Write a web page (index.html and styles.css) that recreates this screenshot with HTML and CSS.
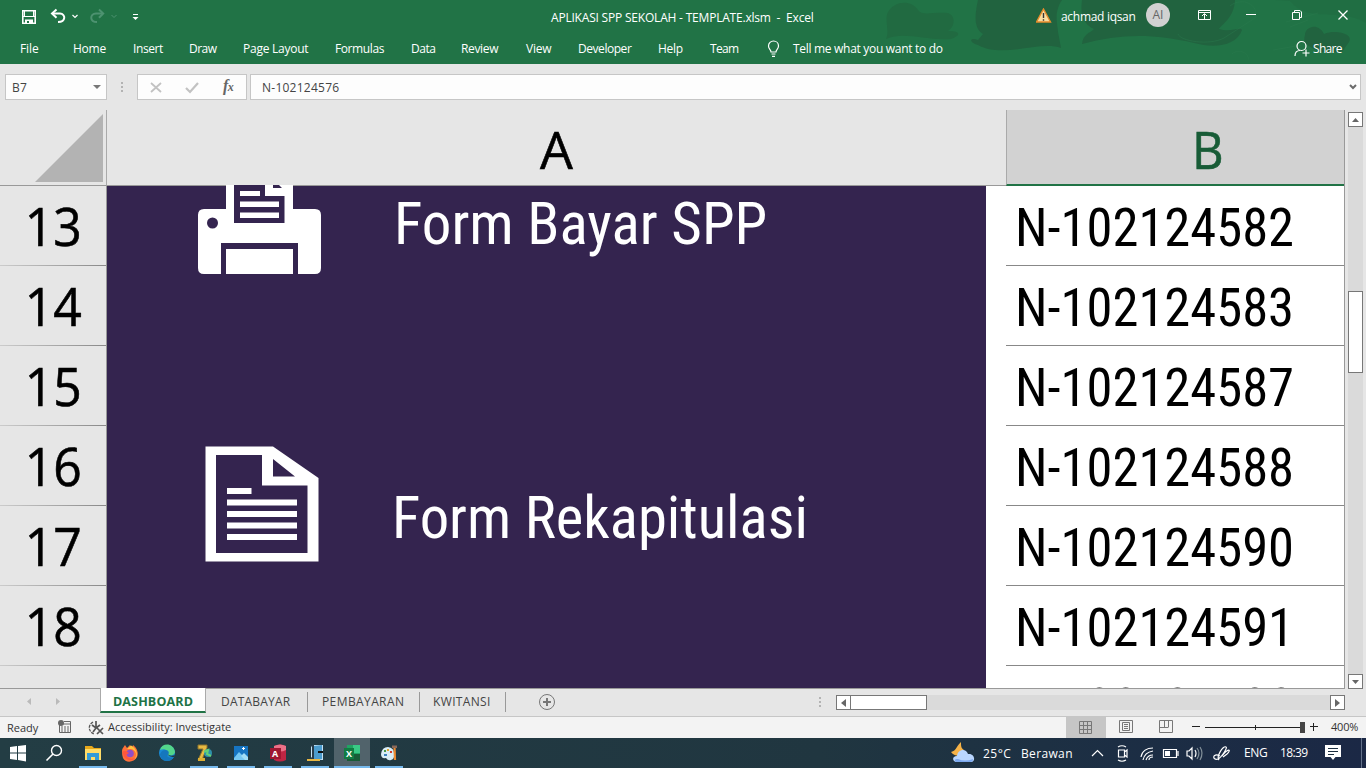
FILE: index.html
```html
<!DOCTYPE html>
<html lang="id">
<head>
<meta charset="utf-8">
<title>APLIKASI SPP SEKOLAH - TEMPLATE.xlsm - Excel</title>
<link rel="stylesheet" href="styles.css">
</head>
<body>
<header class="ribbon">
  <svg class="ribbon-art" width="506" height="64" viewBox="860 0 506 64">
    <g fill="#216a41"><path d="M886 39C890 31 884 20 888 12C894 1 911-1 918 10C922 16 931 12 948 13C956 16 955 27 948 31C960 31 962 35 951 39C925 41 905 31 886 39Z"/>
    <path d="M978 0H1062C1053 13 1058 26 1058 32L1061 48C1040 40 1003 59 978 45C968 42 970 37 978 40L983 34C973 28 975 14 978 0Z" fill="#21633f"/>
    <path d="M1082 0H1235C1234 18 1222 24 1219 29C1231 33 1240 26 1242 30C1236 47 1213 48 1194 43C1152 33 1119 34 1082 44C1083 34 1090 33 1094 29C1080 23 1081 8 1082 0Z" fill="#21633f"/>
    <path d="M1305 35C1305 27 1318 22 1324 34C1336 29 1354 34 1349 42L1342 52H1321C1308 46 1302 44 1305 35Z" fill="#21633f"/><path d="M1275 0H1366V23C1341 7 1308 24 1290 1Z" opacity=".55"/></g>
    <g fill="none" stroke="#2a7b4d" stroke-width="1" opacity=".45"><path d="M1230 6C1242 -4 1260 5 1255 18L1224 38C1209 46 1180 41 1178 34M1286 22L1318 13M1290 27L1308 20M1273 50L1302 45M1232 54C1240 47 1250 55 1248 60"/></g>
  </svg>
  <div class="titlebar">
    <svg class="quick" width="150" height="32" viewBox="0 0 150 32" fill="none">
      <path d="M22.8 10.8H35.2V23.2H22.8Z" stroke="#fff" stroke-width="1.6"/><path d="M23 16.5H35M24.500 10.500V16.500M33.500 16.500V10.500" stroke="#fff"/><path d="M25 19.500H33V24H25Z" fill="#fff"/><path d="M27 21H29V23H27Z" fill="#217346"/>
      <path d="M53 13.5H60C66 14 66 22 58 22" stroke="#fff" stroke-width="2"/><path d="M56.5 9.5L52 13.5L56.5 17.8" stroke="#fff" stroke-width="2"/><path d="M72.5 15L75 17.5L77.5 15" stroke="#fff" stroke-width="1.2"/>
      <g stroke="#4d9270"><path d="M102 13.5H96C89.5 14 89.5 22 97 22" stroke-width="2"/><path d="M99 9.5L103.2 13.5L99 17.8" stroke-width="2"/><path d="M111.500 15L114 17.500L116.500 15"/></g>
      <path d="M133 14.500H138" stroke="#fff"/><path d="M132.500 17H138.500L135.500 20Z" fill="#fff"/>
    </svg>
    <div class="doc-title">APLIKASI SPP SEKOLAH - TEMPLATE.xlsm&nbsp; -&nbsp; Excel</div>
    <svg class="warning" width="16" height="16" viewBox="0 0 16 16"><path d="M7.500 1L14.500 14H.5Z" fill="#f9dda0" stroke="#e58b2b" stroke-width="1.400"/><path d="M7.500 5V10M7.500 11.200V12.800" stroke="#333" stroke-width="1.400"/></svg>
    <span class="user">achmad iqsan</span><span class="avatar">AI</span>
    <svg class="window-controls" width="166" height="32" viewBox="1190 0 166 32" fill="none" stroke="#fff"><path d="M1198.500 10.500H1210.500V19.500H1198.500ZM1198 12.500H1211M1204.500 19V14M1202 16L1204.500 13.500L1207 16M1246 14.500H1256M1292.500 12.500H1299.500V19.500H1292.500ZM1294.500 12V10.500H1300L1301.500 12V17.500H1300"/><path d="M1338.500 10.500L1347.500 19.500M1347.500 10.500L1338.500 19.500" stroke-width="1.300"/></svg>
  </div>
  <nav class="menu">
    <span class="m-file">File</span><span class="m-home">Home</span><span class="m-insert">Insert</span><span class="m-draw">Draw</span><span class="m-layout">Page Layout</span><span class="m-formulas">Formulas</span><span class="m-data">Data</span><span class="m-review">Review</span><span class="m-view">View</span><span class="m-dev">Developer</span><span class="m-help">Help</span><span class="m-team">Team</span>
    <svg class="bulb" width="14" height="18" viewBox="0 0 14 18" fill="none" stroke="#fff" stroke-width="1.200"><path d="M4 12C4 9.500 1.500 9 1.500 6C1.500 3 3.800 1 6.500 1S11.500 3 11.500 6C11.500 9 9 9.500 9 12ZM4.500 14H8.500M5 16.400H8"/></svg>
    <span class="tell">Tell me what you want to do</span>
    <svg class="person" width="17" height="18" viewBox="0 0 17 18" fill="none" stroke="#fff" stroke-width="1.200"><circle cx="7.500" cy="6" r="4.500"/><path d="M1 16C1 12 3 10.500 6 10.500M8.500 13H15.500M12 9.500V16.500"/></svg><span class="share">Share</span>
  </nav>
</header>
<section class="formula-bar">
  <div class="name-box"><span>B7</span><i></i></div><div class="dots"></div>
  <div class="formula-tools"><svg width="108" height="24" viewBox="0 0 108 24" fill="none"><path d="M13 8L23 17M23 8L13 17" stroke="#c2c2c2" stroke-width="1.800"/><path d="M48 13L52 17L60 8" stroke="#c2c2c2" stroke-width="2.200"/></svg><em>f<small>x</small></em></div>
  <div class="formula"><span>N-102124576</span><svg width="8" height="6" viewBox="0 0 8 6" fill="none"><path d="M1 1L4 4L7 1" stroke="#6b6b6b" stroke-width="2"/></svg></div>
</section>
<main class="workspace">
  <div class="sheet">
    <div class="corner"><svg width="68" height="68" viewBox="0 0 68 68"><path d="M68 0V68H0Z" fill="#b3b3b3"/></svg></div>
    <div class="column-a"><span>A</span></div><div class="column-b"><span>B</span></div>
    <div class="row-heads"><div><span>13</span></div><div><span>14</span></div><div><span>15</span></div><div><span>16</span></div><div><span>17</span></div><div><span>18</span></div><div></div></div>
    <div class="dashboard">
      <div class="command pay"><svg width="124" height="90" viewBox="197 185 124 90"><path d="M226 185H293V209H315Q321 209 321 215V268Q321 274 315 274H204Q198 274 198 268V215Q198 209 204 209H226Z" fill="#fff"/><g fill="#34244f"><path d="M234 185H265V196H284.500V223H234ZM221 243H298V274H221ZM273 185H279L282 188H273Z"/><circle cx="212.500" cy="223" r="5.500"/></g><path d="M240 191H260V196H240ZM240 201.500H279V207H240ZM240 212.500H279V218H240ZM226 249H293V274H226Z" fill="#fff"/></svg><span>Form Bayar SPP</span></div>
      <div class="command recap"><svg width="114" height="116" viewBox="205 446 114 116"><path fill="#fff" fill-rule="evenodd" d="M205.500 446.500H273L318.500 478V561.500H205.500ZM216 455H262V485.500H307.500V553H216ZM273 459V476.500H295ZM227 488H251.500V494H227ZM227 499.500H297V505.500H227ZM227 511H297V517H227ZM227 522.500H297V528.500H227ZM227 534H297V540H227Z"/></svg><span>Form Rekapitulasi</span></div>
    </div>
    <div class="records"><div><span>N-102124582</span></div><div><span>N-102124583</span></div><div><span>N-102124587</span></div><div><span>N-102124588</span></div><div><span>N-102124590</span></div><div><span>N-102124591</span></div><div class="partial"><span>N-102124592</span></div></div>
  </div>
  <aside class="scrollbar"><button><svg width="7" height="4"><path d="M3.500 0L7 4H0Z"/></svg></button><div class="thumb"></div><button><svg width="7" height="4"><path d="M0 0H7L3.500 4Z"/></svg></button></aside>
</main>
<section class="sheet-tabs">
  <svg class="tab-arrows" width="100" height="28"><path d="M31 10V17L27 13.500ZM56 10V17L60 13.500Z" fill="#bababa"/></svg>
  <span class="active-tab">DASHBOARD</span><span class="tab databayar">DATABAYAR</span><span class="tab pembayaran">PEMBAYARAN</span><span class="tab kwitansi">KWITANSI</span>
  <svg class="add" width="18" height="18" fill="none" stroke="#777"><circle cx="9" cy="9" r="7.500"/><path d="M5 9H13M9 5V13" stroke-width="2"/></svg>
  <div class="dots"></div><div class="horizontal-scroll"><button><svg width="5" height="8"><path d="M5 0V8L0 4Z"/></svg></button><div class="h-thumb"></div><button><svg width="5" height="8"><path d="M0 0V8L5 4Z"/></svg></button></div>
</section>
<section class="status">
  <span class="ready">Ready</span>
  <svg class="macro" width="14" height="14" viewBox="0 0 14 14"><path d="M1.500 5V12.500H12.500V1.500H6M5 4H12M3 7H5M6 7H8M9 7H11M3 9H5M6 9H8M9 9H11M3 11H5M6 11H8M9 11H11" fill="none" stroke="#666"/><circle cx="3" cy="3" r="3" fill="#666"/></svg>
  <svg class="access" width="17" height="16" viewBox="0 0 17 16" fill="none" stroke="#555"><path d="M5 2C-1 6 1 12 6 14" stroke-dasharray="3 1" stroke-width="1.300"/><path d="M4 5L8 8L12 5M8 1V8L5 12M9 8L15 14M15 8L9 14" stroke-width="1.700"/></svg>
  <span class="access-text">Accessibility: Investigate</span>
  <div class="normal-view"><svg width="14" height="14" fill="none" stroke="#777"><path d="M.5.500H12.500V12.500H.5ZM4.500 0V13M8.500 0V13M0 4.500H13M0 8.500H13"/></svg></div>
  <svg class="views" width="54" height="14" fill="none" stroke="#777"><path d="M.5.500H13.500V12.500H.5ZM3.500 2.500H10.500V10.500H3.500ZM5 4.500H9M5 6.500H9M5 8.500H9M40.500.500H53.500V12.500H40.500ZM45.500 0V7M49.500 0V7M41 7.500H49.500"/></svg>
  <svg class="zoom-slider" width="128" height="14" fill="none" stroke="#222"><path d="M1 6.500H9M14 7.500H111M64.500 5V10M119 6.500H127M122.500 3V11"/><path d="M109 2H114V13H109Z" fill="#444" stroke="none"/></svg><span class="percent">400%</span>
</section>
<footer class="taskbar">
  <svg class="app-icons" width="410" height="30" viewBox="0 738 410 30">
    <path d="M334 738H370V768H334Z" fill="#51636b"/>
    <path d="M10 747L17 746V752.500H10ZM18 746L26 745V752.500H18ZM10 753.500H17V760L10 759ZM18 753.500H26V761.500L18 760Z" fill="#fff"/>
    <circle cx="56.500" cy="750.500" r="5" stroke="#fff" stroke-width="1.400" fill="none"/><path d="M53 754L46.500 760.500" stroke="#fff" stroke-width="1.600"/>
    <path d="M85 746H92L94 748H101V760H85Z" fill="#e7a91c"/><path d="M85 749H101V760H85Z" fill="#ffdc68"/><path d="M87 760V753H99V760H95V757H91V760Z" fill="#329bd9"/>
    <path d="M122 751C122 748 124 747 125 745L127 748L130 745L132 748L133 745C137 748 139 753 137 757C134 763 125 763 123 758Q122 756 122 751Z" fill="#ff7139"/><path d="M127 749L131 745.500C137 748 139 757 134 760C138 755 136 750 131 749Z" fill="#ffc33d"/><circle cx="130" cy="753.500" r="3.800" fill="#914ec6"/><path d="M123 751C122 759 131 763 135 758C130 760 128 758 126 755L129 753L126 751Z" fill="#ff563e"/>
    <circle cx="167" cy="753" r="8" fill="#188bd6"/><path d="M160 750C162 742 174 743 175 752C175 755 169 757 167 754C169 751 165 748 160 750Z" fill="#53d68b"/><path d="M162 751C168 748 171 753 167 756C170 759 173 757 174 757C170 764 160 761 160 754Z" fill="#1577bd"/><path d="M168 754C168 756 171 757 174 757L175 755C172 756 169 756 168 754Z" fill="#233841"/>
    <path d="M198 745H207V748L203 757V760H198L203 749H198Z" fill="#e8bb42" stroke="#8e752d"/><path d="M198 758H205V761H198Z" fill="#dcae33"/><circle cx="208" cy="753" r="4" fill="#2d8faa"/><path d="M204 752L208 750L207 754L211 756" stroke="#63d077" stroke-width="2" fill="none"/>
    <path d="M234 746H248V760H234Z" fill="#1675c2"/><path d="M234 758L239 752L247 760H234Z" fill="#75c8f2"/><path d="M241 756L244 753L248 757V760H245Z" fill="#a2def6"/><path d="M243.500 747V750M242 748.500H245" stroke="#fff"/>
    <path d="M274 746Q280 743 286 746V760Q280 763 274 760Z" fill="#be2543"/><path d="M274 746Q280 743 286 746V750Q280 753 274 750Z" fill="#ec7188"/><path d="M270 748H281V759H270Z" fill="#9e1731"/><text x="272" y="757" class="app-letter">A</text>
    <path d="M311 745H323V760H311Z" fill="#c7e2f4"/><path d="M314 746L322 745V759L314 761Z" fill="#4b9cce"/><path d="M310 745H314V760H308L312 757V747Z" fill="#283c4b"/><path d="M307 759H320V761H307Z" fill="#e7b744"/><path d="M318 752H323" stroke="#111" stroke-width="2"/>
    <path d="M347 745H360V760H347Z" fill="#20a463"/><path d="M353 745H360V753H353Z" fill="#39c985"/><path d="M347 754H360V761H347Z" fill="#185c37"/><path d="M344 748H354V759H344Z" fill="#127c43"/><text x="346" y="757" class="app-letter">X</text>
    <path d="M381 754Q382 747 388 747Q394 748 394 753Q395 759 391 760Q388 761 386 758Q381 759 381 754Z" fill="#d9edf6"/><path d="M384 751H386" stroke="#489b48" stroke-width="2"/><path d="M387 750H389" stroke="#e2a62f" stroke-width="2"/><path d="M390 752H392" stroke="#d43d29" stroke-width="2"/><path d="M384 755H387" stroke="#3c82bd" stroke-width="2"/><path d="M394.500 747L395 760" stroke="#ee8b30" stroke-width="2.200"/><path d="M392 745.500H397V748H392Z" fill="#8a6a5b"/>
    <g fill="#76b9ed"><path d="M79 766H107V768H79ZM190 766H218V768H190ZM227 766H255V768H227ZM264 766H292V768H264ZM301 766H329V768H301ZM334 766H370V768H334ZM375 766H403V768H375Z"/></g>
  </svg>
  <svg class="weather" width="24" height="22" viewBox="0 0 24 22"><path d="M10 0C4 6 6 8 0 10C3 15 13 16 13 8C10 6 10 4 10 0Z" fill="#f6b348"/><path d="M5 20C1 19 1 14 6 14C7 7 15 6 17 12C24 11 25 20 20 20Z" fill="#b9d6ff"/><path d="M5 20C3 19 3 17 7 17Q14 20 22 17Q22 20 19 20Z" fill="#7ca9ef"/></svg>
  <span class="temp">25°C</span><span class="cloudy">Berawan</span>
  <svg class="tray" width="144" height="24" viewBox="1090 741 144 24" fill="none" stroke="#fff" stroke-width="1.200"><path d="M1092 756L1097.500 750.500L1103 756"/><path d="M1118.500 750H1124.500V757H1118.500ZM1124.500 752L1127 750V757L1124.500 755M1118 747Q1122 744.500 1126 747M1118 760Q1122 762.500 1126 760"/><path d="M1141 757C1142 751 1147 748 1153 748M1143 760C1144 755 1147 752 1153 751M1146 760C1147 757 1149 755 1153 755M1149 760C1149 758 1151 757 1153 757"/><path d="M1163.500 749.500H1176.500V757.500H1163.500ZM1178 751V756"/><path d="M1165 751H1170V756H1165Z" fill="#fff" stroke="none"/><path d="M1187 751H1189L1192 748V759L1189 756H1187ZM1195 750Q1197 753 1195 757"/><path d="M1197 748Q1201 753 1197 759M1200 747Q1204 753 1200 760" stroke="#829099"/><path d="M1220 756C1212 752 1212 761 1218 759C1222 757 1228 747 1226 747C1223 745 1216 757 1219 760M1222 756C1228 748 1232 749 1227 754L1223 757"/></svg>
  <span class="language">ENG</span><span class="clock">18:39</span><svg class="notifications" width="16" height="17"><path d="M0 0H16V12H10.500L8 15L5.500 12H0Z" fill="#fff"/><path d="M3 3.500H13M3 6.500H13M3 9.500H9" stroke="#1c2f40"/></svg><i class="desktop-edge"></i>
</footer>
</body>
</html>
```
FILE: styles.css
```css
* { box-sizing: border-box; }
body { margin: 0; width: 1366px; height: 768px; overflow: hidden; background: #e6e6e6; font: 12px/16px "Open Sans", "Noto Sans", sans-serif; }
span { white-space: nowrap; }
svg { display: block; flex: none; }
button { margin: 0; padding: 0; background: #fff; border: 1px solid #777; display: flex; align-items: center; justify-content: center; }
button path { fill: #666; }
.ribbon { height: 64px; background: #217346; color: #fff; position: relative; }
.ribbon-art { position: absolute; right: 0; top: 0; }
.titlebar, .menu { position: relative; height: 32px; display: flex; align-items: center; }
.doc-title { margin-left: 401px; width: 264px; letter-spacing: -.2px; white-space: nowrap; padding-top: 3px; }
.warning { margin-left: 221px; }
.user { margin-left: 9px; width: 85px; letter-spacing: -.3px; padding-top: 1px; }
.avatar { width: 24px; height: 24px; border-radius: 50%; background: #d1d1d1; color: #666; display: grid; place-items: center; margin-top: -2px; }
.window-controls { margin-left: 20px; }
.menu { padding-left: 20px; height: 33px; letter-spacing: -.25px; }
.menu > span { flex: none; padding-top: 1px; }
.m-file { width: 53px; letter-spacing: -.1px; } .m-home { width: 60px; } .m-insert { width: 56px; letter-spacing: -.4px; } .m-draw { width: 54px; letter-spacing: -.5px; } .m-layout { width: 92px; } .m-formulas { width: 76px; letter-spacing: -.4px; } .m-data { width: 50px; letter-spacing: -.5px; } .m-review { width: 65px; letter-spacing: -.35px; } .m-view { width: 52px; letter-spacing: -.2px; } .m-dev { width: 80px; letter-spacing: -.45px; } .m-help { width: 52px; } .m-team { width: 57px; letter-spacing: -.7px; }
.tell { margin-left: 12px; width: 501px; letter-spacing: -.3px; }
.share { margin-left: 2px; letter-spacing: -.7px; }
.formula-bar { height: 46px; padding: 10px 5px 0; display: flex; color: #444; }
.name-box, .formula-tools, .formula { height: 26px; background: #fdfdfd; border: 1px solid #c6c6c6; }
.name-box { width: 102px; padding: 0 5px 0 6px; display: flex; align-items: center; justify-content: space-between; }
.name-box i { border: 4px solid transparent; border-top-color: #777; border-bottom: 0; }
.name-box span, .formula span { padding-top: 2px; letter-spacing: .25px; }
.dots { width: 2px; height: 11px; background: repeating-linear-gradient(#b3b3b3 0 2px, transparent 2px 4px); }
.formula-bar .dots { margin: 8px 15px 0 14px; }
.formula-tools { width: 110px; display: flex; margin-left: -1px; }
.formula-tools svg { width: 108px; margin-right: -23px; }
.formula-tools em { font: italic bold 16px/22px "Liberation Serif", serif; color: #666; letter-spacing: -.5px; }
.formula-tools small { font-size: 12px; }
.formula { margin-left: 3px; flex: 1; padding: 0 3px 0 11px; display: flex; align-items: center; justify-content: space-between; }
.workspace { height: 578px; display: flex; }
.sheet { width: 1345px; height: 579px; display: grid; grid-template: 76px 502px / 107px 899px 338px; border-right: 1px solid #999; border-bottom: 1px solid #999; overflow: hidden; }
.corner { border-right: 1px solid #aaa; border-bottom: 1px solid #999; padding: 4px 0 0 35px; }
.column-a, .column-b { border-bottom: 1px solid #999; display: grid; place-items: center; font-size: 52px; line-height: 70px; padding-top: 3px; }
.column-b { background: #d2d2d2; border-left: 1px solid #aaa; border-bottom: 2px solid #217346; color: #185c37; padding-left: 65px; }
.column-a span, .column-b span, .row-heads span { -webkit-text-stroke: .6px currentColor; }
.column-b span { transform: scaleX(.94); }
.row-heads { border-right: 1px solid #999; }
.row-heads div { height: 80px; border-bottom: 1px solid; border-image: linear-gradient(90deg, #ccc, #888) 1; display: grid; place-items: center; font-size: 53px; line-height: 70px; padding-top: 1px; }
.row-heads span { transform: scaleX(.94); }
.dashboard { width: 879px; background: #34244f; color: #fff; box-shadow: 20px 0 #fff; }
.command { display: flex; align-items: flex-start; }
.pay { height: 260px; padding-left: 90px; margin-top: -1px; }
.recap { padding-left: 98px; padding-top: 1px; }
.command span, .records span { font-family: "Roboto Condensed", Roboto, sans-serif; font-size: 59px; line-height: 70px; transform-origin: 0 0; display: block; }
.pay span { margin: 4px 0 0 73px; }
.recap span { margin: 37px 0 0 73px; transform: scaleX(.995); }
.records { background: #fff; overflow: hidden; height: 502px; }
.records div { height: 80px; padding: 7px 0 0 9px; border-bottom: 1px solid #888; }
.records span { font-size: 53.5px; transform: scaleX(.982); }
.scrollbar { margin: 2px 3px 0 3px; width: 15px; height: 577px; background: #dadada; display: flex; flex-direction: column; }
.scrollbar button { width: 15px; height: 15px; }
.thumb { margin: 164px 0 301px; height: 82px; background: #fff; border: 1px solid #777; flex: none; }
.sheet-tabs { height: 28px; display: flex; color: #444; }
.active-tab { background: #fff; border: 1px solid #aaa; border-top: 0; border-bottom: 2px solid #217346; color: #217346; width: 106px; height: 25px; text-align: center; font-size: 12.5px; font-weight: 700; line-height: 27px; letter-spacing: .15px; }
.tab { height: 20px; margin-top: 4px; border-right: 1px solid #999; line-height: 19px; padding-left: 14px; letter-spacing: -.15px; }
.databayar { width: 102px; padding-left: 15px; letter-spacing: .2px; } .pembayaran { width: 112px; letter-spacing: .4px; } .kwitansi { width: 86px; padding-left: 13px; letter-spacing: .35px; }
.add { margin: 5px 0 0 32px; }
.sheet-tabs .dots { margin: 9px 15px 0 263px; }
.horizontal-scroll { width: 509px; height: 15px; margin-top: 7px; background: #dadada; display: flex; }
.horizontal-scroll button { width: 15px; height: 15px; flex: none; }
.h-thumb { width: 77px; margin-left: -1px; margin-right: auto; border: 1px solid #777; background: #fff; }
.status { height: 22px; background: #f3f3f3; border-top: 1px solid #c6c6c6; display: flex; align-items: center; color: #333; font-size: 11px; }
.ready { width: 51px; padding-left: 7px; padding-top: 1px; }
.macro { margin-left: 7px; margin-top: -2px; } .access { margin-left: 16px; } .access-text { margin-left: 3px; width: 958px; letter-spacing: .02px; margin-top: -1px; }
.normal-view { width: 40px; height: 21px; background: #c6c6c6; display: grid; place-items: center; }
.views { margin-left: 13px; margin-top: -1px; } .zoom-slider { margin-left: 18px; margin-top: -1px; } .percent { margin-left: 12px; letter-spacing: -.2px; margin-top: -1px; }
.taskbar { height: 30px; background: linear-gradient(90deg, #233d44 0, #203640 60%, #1c2e44 82%, #1b2845); display: flex; align-items: center; color: #fff; }
.app-letter { font: 700 9px "Open Sans", sans-serif; fill: #fff; }
.weather { margin-left: 541px; } .temp { margin-left: 8px; width: 38px; letter-spacing: .5px; } .cloudy { width: 53px; letter-spacing: .35px; } .tray { margin-left: 16px; }
.taskbar > span { flex: none; }
.temp, .cloudy { padding-top: 1px; }
.language { margin-left: 10px; width: 36px; letter-spacing: -.4px; } .clock { width: 28px; letter-spacing: -.6px; } .notifications { margin-left: 17px; } .desktop-edge { width: 1px; height: 30px; background: #64728a; margin-left: 20px; }
```
